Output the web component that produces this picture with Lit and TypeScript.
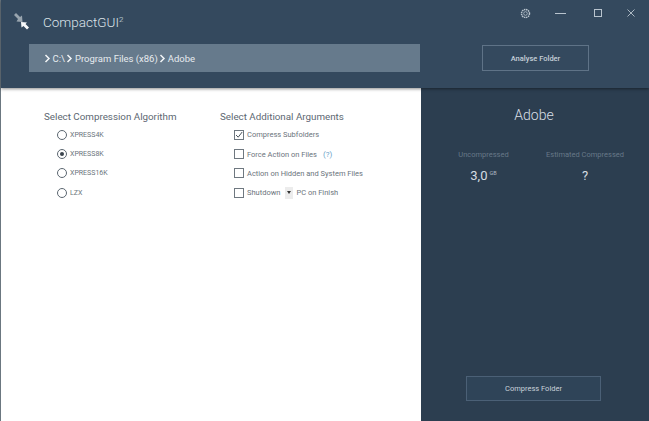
import { LitElement, html, css } from "lit";
import { customElement } from "lit/decorators.js";

@customElement("app-root")
export class AppRoot extends LitElement {
  static styles = css`
    :host { display: block; width: 649px; height: 421px; font-family: Roboto, "Open Sans", sans-serif; overflow: hidden; }
    .win { width: 649px; height: 421px; display: grid; grid-template-rows: 88px 1fr; grid-template-columns: 420px 228px; background: #2f4356; border-left: 1px solid #6b7780; box-sizing: border-box; }
    .head { grid-column: 1 / 3; background: #34495e; display: flex; flex-direction: column; box-shadow: 0 1px 3px rgba(0,0,0,.45); position: relative; z-index: 1; }
    .title { height: 44px; display: flex; align-items: center; }
    .logo { width: 20px; height: 18px; margin: 0 0 3px 11px; flex: none; }
    .name { margin: 0 0 1px 11px; font-size: 13.5px; font-weight: 300; color: #dbe2e8; }
    .name sup { font-size: 8px; line-height: 0; vertical-align: 5px; }
    .ctrls { margin: 0 0 0 auto; display: flex; align-items: center; padding: 0 14px 18px 0; color: #b9c4ce; }
    .ctrls svg { display: block; }
    .gear { margin-right: 24px; }
    .min { margin-right: 28px; }
    .max { margin-right: 25px; }
    .row { display: flex; height: 28px; }
    .crumb { width: 391px; margin-left: 28px; background: #667a8c; color: #e6ebef; font-size: 9.5px; display: flex; align-items: center; gap: 1.5px; padding-left: 15px; box-sizing: border-box; }
    .crumb svg { display: block; }
    .analyse { width: 107px; height: 26px; margin: 1px 0 0 62px; border: 1px solid #5f7387; box-sizing: border-box; color: #c6d0d8; font-size: 7.5px; font-weight: 500; display: flex; align-items: center; justify-content: center; }
    .left { background: #fff; display: flex; padding: 21px 0 0 43px; box-sizing: border-box; }
    .col { width: 176px; }
    .col h2 { margin: 0; font-size: 9.8px; font-weight: 400; color: #5d6872; line-height: 16px; }
    .opt { display: flex; align-items: center; height: 19.4px; color: #6b747c; white-space: nowrap; }
    .radios .opt { padding-left: 13px; gap: 3px; font-size: 7px; }
    .checks .opt { padding-left: 14px; gap: 3px; font-size: 7.5px; }
    .radio { width: 8px; height: 8px; border: 1px solid #5b6670; border-radius: 50%; display: flex; align-items: center; justify-content: center; }
    .radio i { width: 4px; height: 4px; border-radius: 50%; background: #3a444d; }
    .box { width: 8px; height: 8px; border: 1px solid #6f7880; display: block; flex: none; }
    .hint { color: #6a9fc9; margin-left: 3px; font-size: 8px; }
    .drop { width: 8px; height: 12px; background: #ececec; margin: 0 0 0 2px; display: flex; align-items: center; justify-content: center; }
    .drop i { border: 2px solid transparent; border-top: 3px solid #333; border-bottom: 0; }
    .right { background: #2c3e50; display: flex; flex-direction: column; padding-top: 17px; box-sizing: border-box; }
    .folder { font-size: 14px; font-weight: 300; color: #d8dfe5; line-height: 20px; width: 226px; text-align: center; }
    .stats { display: flex; margin-top: 24px; }
    .stat { display: flex; flex-direction: column; align-items: center; gap: 6px; }
    .stat:first-child { width: 125px; }
    .stat:last-child { width: 78px; }
    .stat span { font-size: 7.5px; color: #677888; line-height: 12px; white-space: nowrap; }
    .stat b { font-size: 13px; font-weight: 400; color: #d5dce2; line-height: 18px; }
    .stat b sup { font-size: 5.5px; vertical-align: 5px; line-height: 0; color: #aeb9c2; margin-left: 2px; }
    .compress { width: 135px; height: 25px; margin: auto 0 20px 45px; border: 1px solid #4b6076; background: #2f4458; box-sizing: border-box; color: #c9d2da; font-size: 7.5px; display: flex; align-items: center; justify-content: center; }
  `;

  private chev() {
    return html`<svg width="7" height="9" viewBox="0 0 7 9"><path d="M1.5 1 L5 4.5 L1.5 8" fill="none" stroke="#f2f5f7" stroke-width="1.5"/></svg>`;
  }

  render() {
    const algos = ["XPRESS4K", "XPRESS8K", "XPRESS16K", "LZX"];
    return html`<div class="win">
      <div class="head">
        <div class="title">
          <svg class="logo" viewBox="0 0 20 18">
            <path d="M2 3 L4 1 L8 5 L10 3.5 L10.5 10 L4.5 9.5 L6 7 Z" fill="#98a4ae"/>
            <path d="M17 15.5 L15 17.5 L11.5 14 L9.5 15.5 L9 10 L15 10.5 L13.5 12 Z" fill="#f6f8fa"/>
          </svg>
          <div class="name">CompactGUI<sup>2</sup></div>
          <div class="ctrls">
            <svg class="gear" width="11" height="11" viewBox="0 0 11 11" fill="none" stroke="currentColor"><circle cx="5.5" cy="5.5" r="1.8" stroke-width=".8"/><circle cx="5.5" cy="5.5" r="4" stroke-width="1.5" stroke-dasharray="1.5 .6"/></svg>
            <svg class="min" width="11" height="3" viewBox="0 0 11 3"><path d="M0 1.5H11" stroke="currentColor" stroke-width="1"/></svg>
            <svg class="max" width="8" height="8" viewBox="0 0 8 8"><rect x=".5" y=".5" width="7" height="7" fill="none" stroke="currentColor"/></svg>
            <svg width="8" height="8" viewBox="0 0 8 8"><path d="M.5 .5L7.5 7.5M7.5 .5L.5 7.5" stroke="currentColor" stroke-width=".9"/></svg>
          </div>
        </div>
        <div class="row">
          <div class="crumb">${this.chev()}<span>C:\\</span>${this.chev()}<span>Program Files (x86)</span>${this.chev()}<span>Adobe</span></div>
          <div class="analyse">Analyse Folder</div>
        </div>
      </div>
      <div class="left">
        <div class="col radios">
          <h2>Select Compression Algorithm</h2>
          ${algos.map((a, i) => html`<div class="opt"><span class="radio">${i === 1 ? html`<i></i>` : ""}</span>${a}</div>`)}
        </div>
        <div class="col checks">
          <h2>Select Additional Arguments</h2>
          <div class="opt"><svg class="box" viewBox="0 0 8 8"><path d="M1 4 L3.2 6.2 L7.2 1" fill="none" stroke="#4a545c" stroke-width="1"/></svg>Compress Subfolders</div>
          <div class="opt"><span class="box"></span>Force Action on Files<span class="hint">(?)</span></div>
          <div class="opt"><span class="box"></span>Action on Hidden and System Files</div>
          <div class="opt"><span class="box"></span>Shutdown<span class="drop"><i></i></span>PC on Finish</div>
        </div>
      </div>
      <div class="right">
        <div class="folder">Adobe</div>
        <div class="stats">
          <div class="stat"><span>Uncompressed</span><b>3,0<sup>GB</sup></b></div>
          <div class="stat"><span>Estimated Compressed</span><b>?</b></div>
        </div>
        <div class="compress">Compress Folder</div>
      </div>
    </div>`;
  }
}
